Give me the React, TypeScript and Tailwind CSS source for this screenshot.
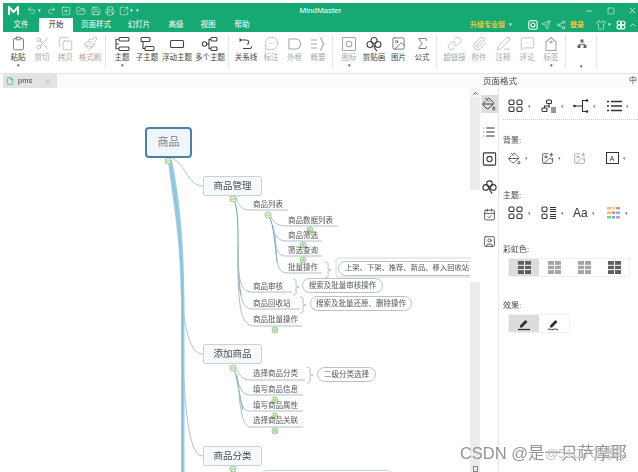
import {
  ChevronUp,
  Copy,
  File,
  FolderOpen,
  Image,
  ImagePlus,
  Link,
  MessageCircleMore,
  MessageSquareMore,
  Minus,
  Paperclip,
  PenLine,
  Printer,
  Redo2,
  Save,
  Scissors,
  Send,
  Share2,
  Shirt,
  Sigma,
  SquarePlus,
  SquareArrowOutUpRight,
  Square,
  Undo2,
  X,
  Paintbrush,
  Clipboard,
  CalendarCheck,
  SquareUser,
  List,
  PaintBucket,
} from 'lucide-react';
import type { ReactNode } from 'react';

const TopicIcon = ({ kind }: { kind: string }) => (
  <svg width="18" height="16" viewBox="0 0 18 16" fill="none" stroke="currentColor" strokeWidth="1.1">
    {kind === 'main' && (
      <>
        <rect x="6" y="1.500" width="10" height="3.500" rx="1" />
        <rect x="6" y="11" width="10" height="3.500" rx="1" />
        <path d="M6 3.200H3v9.500h3M3 8h3" />
      </>
    )}
    {kind === 'sub' && (
      <>
        <rect x="3" y="1.500" width="9" height="4" rx="1" />
        <rect x="7" y="10.500" width="9" height="4" rx="1" />
        <path d="M5 5.500v7h2" />
      </>
    )}
    {kind === 'float' && <rect x="2.500" y="4.500" width="13" height="7" rx="1" />}
    {kind === 'multi' && (
      <>
        <circle cx="3.500" cy="8" r="2.200" />
        <rect x="10" y="1.500" width="6" height="3.500" rx="1" />
        <rect x="10" y="11" width="6" height="3.500" rx="1" />
        <path d="M5.500 8H8V3.200h2M8 8v4.800h2" />
      </>
    )}
    {kind === 'relation' && <path d="M3 4h6c3 0 4 3 1 4.500M6 12.500h7c1.500 0 2-1 1-2M2.500 2.500 4 4 2.500 5.500" />}
    {kind === 'outline' && <path d="M3 3h7c6 0 6 10 0 10H3z" />}
    {kind === 'summary' && <path d="M2 4h6M2 8h6M2 12h6M11 2c3 0 1 5 4 6-3 1-1 6-4 6" />}
    {kind === 'mark' && (
      <>
        <rect x="2.500" y="1.500" width="13" height="13" rx="1" />
        <circle cx="9" cy="8" r="2.800" />
      </>
    )}
    {kind === 'clover' && (
      <>
        <circle cx="9" cy="4.500" r="3" />
        <circle cx="5" cy="8.500" r="3" />
        <circle cx="13" cy="8.500" r="3" />
        <path d="M9 8.500c0 3 1 5 3 6.500" />
      </>
    )}
    {kind === 'tag' && (
      <>
        <path d="M4 6l5-4.500L14 6v8.500H4z" />
        <circle cx="9" cy="6" r="1" />
      </>
    )}
  </svg>
);

const GridIcon = ({ lines = false }: { lines?: boolean }) => (
  <svg width="16" height="14" viewBox="0 0 16 14" fill="none" stroke="#333" strokeWidth="1.1">
    <rect x="1" y="1" width="5" height="4.500" rx="1.300" />
    <rect x="1" y="8" width="5" height="4.500" rx="1.300" />
    {lines ? (
      <path d="M9 1.500h6M9 3.500h6M9 5.500h6M9 8.500h6M9 10.500h6M9 12.500h6" />
    ) : (
      <>
        <rect x="9" y="1" width="5" height="4.500" rx="1.300" />
        <rect x="9" y="8" width="5" height="4.500" rx="1.300" />
      </>
    )}
  </svg>
);

const OrgIcon = () => (
  <svg width="16" height="14" viewBox="0 0 16 14" fill="none" stroke="#333" strokeWidth="1.100">
    <rect x="5.500" y="1" width="5" height="3.500" rx="1" />
    <rect x="1" y="9" width="5" height="3.500" rx="1" />
    <path d="M8 4.500v2.500H3.500v2M8 7v2M10 9h5M10 11h5M10 13h5" />
  </svg>
);

const BranchIcon = () => (
  <svg width="16" height="14" viewBox="0 0 16 14" fill="none" stroke="#333" strokeWidth="1.100">
    <path d="M13 1.500H9.500v11H13M1 7h8.500" />
    <circle cx="1.500" cy="7" r="0.800" fill="#333" />
    <circle cx="14" cy="1.500" r="0.800" fill="#333" />
    <circle cx="14" cy="12.500" r="0.800" fill="#333" />
  </svg>
);

const ListLinesIcon = () => (
  <svg width="16" height="14" viewBox="0 0 16 14" stroke="#333" strokeWidth="1.300">
    <path d="M5 2.500h11M5 7h11M5 11.500h11" />
    <path d="M1 2.500h2M1 7h2M1 11.500h2" />
  </svg>
);

const ColorIcon = () => (
  <svg width="15" height="14" viewBox="0 0 15 14">
    <rect x="1" y="1" width="4" height="2.500" fill="#f7a8c9" />
    <rect x="6" y="1" width="3" height="2.500" fill="#f4d35e" />
    <rect x="10" y="1" width="4" height="2.500" fill="#c58be6" />
    <rect x="1" y="5.500" width="4" height="2.500" fill="#f6c04d" />
    <rect x="6" y="5.500" width="3" height="2.500" fill="#ee7b7b" />
    <rect x="10" y="5.500" width="4" height="2.500" fill="#6cc6e8" />
    <rect x="1" y="10" width="4" height="2.500" fill="#7fd08a" />
    <rect x="6" y="10" width="3" height="2.500" fill="#59b7e4" />
    <rect x="10" y="10" width="4" height="2.500" fill="#e78ad0" />
  </svg>
);

const RainbowIcon = ({ dark }: { dark: boolean }) => (
  <svg width="13" height="13" viewBox="0 0 13 13">
    <rect width="13" height="13" fill={dark ? '#5f5f5f' : '#a5a5a5'} />
    <path d="M0 4.300h13M0 8.600h13M6.500 0v13" stroke="#fff" strokeWidth="1" />
  </svg>
);

const EffectIcon = ({ rough }: { rough?: boolean }) => (
  <svg width="14" height="14" viewBox="0 0 14 14" fill="none">
    <path d="M3 8.500 8.500 3l2 2L5 10.500H3z" fill="#2e2e2e" />
    {rough ? (
      <path d="M1 12.500c2-1.500 3 1 5 0s3-.5 5 .5" stroke="#2e2e2e" strokeWidth="1" />
    ) : (
      <path d="M1 12.500h12" stroke="#2e2e2e" strokeWidth="1.200" />
    )}
  </svg>
);

type RibbonItem = { label: string; icon: ReactNode; w: string; muted?: boolean; caret?: boolean };

const ic = { size: 15, strokeWidth: 1.1 };

const clipboardGroup: RibbonItem[] = [
  { label: '粘贴', icon: <Clipboard {...ic} />, w: 'w-[24px]', caret: true },
  { label: '剪切', icon: <Scissors {...ic} />, w: 'w-[24px]', muted: true },
  { label: '拷贝', icon: <Copy {...ic} />, w: 'w-[23px]', muted: true },
  { label: '格式刷', icon: <Paintbrush {...ic} />, w: 'w-[26px]', muted: true },
];
const topicGroup: RibbonItem[] = [
  { label: '主题', icon: <TopicIcon kind="main" />, w: 'w-[24px]', caret: true },
  { label: '子主题', icon: <TopicIcon kind="sub" />, w: 'w-[26px]' },
  { label: '浮动主题', icon: <TopicIcon kind="float" />, w: 'w-[34px]' },
  { label: '多个主题', icon: <TopicIcon kind="multi" />, w: 'w-[32px]' },
];
const relationGroup: RibbonItem[] = [
  { label: '关系线', icon: <TopicIcon kind="relation" />, w: 'w-[26px]' },
  { label: '标注', icon: <MessageCircleMore {...ic} />, w: 'w-[24px]', muted: true },
  { label: '外框', icon: <TopicIcon kind="outline" />, w: 'w-[23px]', muted: true },
  { label: '概要', icon: <TopicIcon kind="summary" />, w: 'w-[24px]', muted: true },
];
const insertGroup: RibbonItem[] = [
  { label: '图标', icon: <TopicIcon kind="mark" />, w: 'w-[24px]', muted: true, caret: true },
  { label: '剪贴画', icon: <TopicIcon kind="clover" />, w: 'w-[26px]' },
  { label: '图片', icon: <Image {...ic} />, w: 'w-[23px]' },
  { label: '公式', icon: <Sigma {...ic} />, w: 'w-[24px]' },
];
const linkGroup: RibbonItem[] = [
  { label: '超链接', icon: <Link {...ic} />, w: 'w-[25px]', muted: true },
  { label: '附件', icon: <Paperclip {...ic} />, w: 'w-[24px]', muted: true },
  { label: '注释', icon: <PenLine {...ic} />, w: 'w-[24px]', muted: true },
  { label: '评论', icon: <MessageSquareMore {...ic} />, w: 'w-[24px]', muted: true },
  { label: '标签', icon: <TopicIcon kind="tag" />, w: 'w-[24px]', muted: true, caret: true },
];

const RibbonGroup = ({ items, className }: { items: RibbonItem[]; className: string }) => (
  <div className={`flex h-[35px] border-r border-[#e6e6e6] ${className}`}>
    {items.map((item) => (
      <div
        key={item.label}
        className={`flex shrink-0 flex-col items-center ${item.w} ${item.muted ? 'text-[#a8a8a8]' : 'text-[#444]'}`}
      >
        <div className="flex h-[19px] items-center">{item.icon}</div>
        <span className="whitespace-nowrap text-[7.5px] leading-[9px]">{item.label}</span>
        {item.caret && <span className="text-[5px] leading-[6px] text-[#444]">▾</span>}
      </div>
    ))}
  </div>
);

const tabs = [
  { label: '文件', className: 'w-[36px] text-white' },
  { label: '开始', className: 'w-[34px] bg-white text-[#333]' },
  { label: '页面样式', className: 'w-[46px] text-white' },
  { label: '幻灯片', className: 'w-[40px] text-white' },
  { label: '高级', className: 'w-[34px] text-white' },
  { label: '视图', className: 'w-[30px] text-white' },
  { label: '帮助', className: 'w-[38px] text-white' },
];

const TitleBar = () => (
  <div className="ml-[3px] flex h-[29px] flex-col bg-[#17a974] text-white">
    <div className="grid h-[15px] grid-cols-[1fr_auto_1fr] items-center">
      <div className="flex items-center">
        <svg className="ml-[5px] mr-[8px]" width="11" height="10" viewBox="0 0 11 10" fill="none" stroke="#fff" strokeWidth="2">
          <path d="M1 9V1l4.500 5L10 1v8" />
        </svg>
        <Undo2 size={9} strokeWidth={1.3} />
        <span className="ml-[2px] mr-[6px] text-[5px]">▾</span>
        <Redo2 size={9} strokeWidth={1.3} className="mr-[5px]" />
        <SquarePlus size={10} strokeWidth={1.2} className="mr-[5px]" />
        <FolderOpen size={10} strokeWidth={1.2} className="mr-[5px]" />
        <Save size={10} strokeWidth={1.2} className="mr-[4px]" />
        <Printer size={10} strokeWidth={1.2} className="mr-[4px]" />
        <SquareArrowOutUpRight size={10} strokeWidth={1.2} />
        <span className="ml-[1px] text-[5px]">▾</span>
        <span className="ml-[3px] text-[5px]">▾</span>
      </div>
      <span className="text-[8px] leading-none">MindMaster</span>
      <div className="flex items-center justify-end">
        <Minus size={8} strokeWidth={2} className="mr-[14px]" />
        <Square size={8} strokeWidth={1.5} className="mr-[13px]" />
        <X size={9} strokeWidth={2} className="mr-[1px]" />
      </div>
    </div>
    <div className="flex h-[14px] items-stretch">
      {tabs.map((tab) => (
        <div key={tab.label} className={`flex items-center justify-center text-[7.5px] ${tab.className}`}>
          {tab.label}
        </div>
      ))}
      <div className="flex flex-1 items-center justify-end">
        <span className="text-[7px] font-bold text-[#f0c53c]">升级专业版</span>
        <span className="ml-[4px] mr-[16px] text-[5px]">▾</span>
        <TitleGlyph />
        <Send size={10} strokeWidth={1.3} className="mr-[5px]" />
        <Share2 size={10} strokeWidth={1.3} className="mr-[4px]" />
        <span className="mr-[12px] text-[7px] font-bold text-[#f0c53c]">登录</span>
        <Shirt size={10} strokeWidth={1.3} />
        <span className="ml-[2px] mr-[5px] text-[5px]">▾</span>
        <span className="mr-[2px] flex">
          <TopicCloverSmall />
        </span>
        <ChevronUp size={10} strokeWidth={1.6} />
      </div>
    </div>
  </div>
);

const TitleGlyph = () => (
  <svg className="mr-[3px]" width="10" height="10" viewBox="0 0 10 10" fill="none" stroke="#fff" strokeWidth="1.100">
    <rect x="0.800" y="0.800" width="8.400" height="8.400" rx="1.500" />
    <circle cx="5" cy="5" r="2" />
  </svg>
);

const TopicCloverSmall = () => (
  <svg width="10" height="10" viewBox="0 0 10 10" fill="none" stroke="#fff" strokeWidth="1.100">
    <circle cx="3" cy="3" r="2" />
    <circle cx="7" cy="3" r="2" />
    <circle cx="3" cy="7" r="2" />
    <circle cx="7" cy="7" r="2" />
  </svg>
);

const Ribbon = () => (
  <div className="flex h-[41px] items-start bg-white pl-[6px] pt-[2px]">
    <RibbonGroup items={clipboardGroup} className="mr-[4px] pr-[2px]" />
    <RibbonGroup items={topicGroup} className="mr-[4px] pr-[2px]" />
    <RibbonGroup items={relationGroup} className="mr-[4px] pr-[2px]" />
    <RibbonGroup items={insertGroup} className="mr-[5px] pr-[2px]" />
    <RibbonGroup items={linkGroup} className="mr-[6px] pr-[2px]" />
    <div className="flex h-[35px] w-[25px] flex-col items-center border-r border-[#e6e6e6] pr-[5px] text-[#666]">
      <svg className="mt-[5px]" width="10" height="10" viewBox="0 0 10 10" fill="#666">
        <rect x="3.500" y="0.500" width="3" height="3" />
        <rect x="0.500" y="6" width="3" height="3" />
        <rect x="6.500" y="6" width="3" height="3" />
        <path d="M5 3.500v1.500H2v1h1V5.800h4V7h1V5H5.500V3.500z" />
      </svg>
      <span className="mt-[14px] text-[5px] leading-[6px] text-[#444]">▾</span>
    </div>
  </div>
);

const TabStrip = () => (
  <div className="flex h-[15px] border-t border-[#e4e4e4] bg-[#fbfbfb]">
    <div className="w-[470px] pl-[3px]">
      <div className="flex h-full w-[54px] items-center bg-[#e3e3e3] pl-[3px] text-[#444]">
        <File size={8} strokeWidth={1.8} className="text-[#17a974]" />
        <span className="ml-[4px] text-[7.5px]">pms</span>
        <X size={7} strokeWidth={1.5} className="ml-[12px] text-[#888]" />
      </div>
    </div>
    <div className="flex flex-1 items-center justify-between pl-[13px] pr-[1px] text-[#444]">
      <span className="text-[8.5px]">页面格式</span>
      <span className="text-[8px]">中</span>
    </div>
  </div>
);

const topics = [
  { label: '商品管理', className: 'left-[203px] top-[88px]' },
  { label: '添加商品', className: 'left-[203px] top-[256px]' },
  { label: '商品分类', className: 'left-[203px] top-[358px]' },
];

const subTopics = [
  { label: '商品列表', className: 'left-[253px] top-[111px]' },
  { label: '商品数据列表', className: 'left-[288px] top-[127px]' },
  { label: '商品筛选', className: 'left-[288px] top-[142px]' },
  { label: '筛选查询', className: 'left-[288px] top-[157px]' },
  { label: '批量操作', className: 'left-[288px] top-[174px]' },
  { label: '商品审核', className: 'left-[253px] top-[193px]' },
  { label: '商品回收站', className: 'left-[253px] top-[210px]' },
  { label: '商品批量操作', className: 'left-[253px] top-[226px]' },
  { label: '选择商品分类', className: 'left-[253px] top-[280px]' },
  { label: '填写商品信息', className: 'left-[253px] top-[296px]' },
  { label: '填写商品属性', className: 'left-[253px] top-[312px]' },
  { label: '选择商品关联', className: 'left-[253px] top-[327px]' },
];

const pills = [
  { label: '上架、下架、推荐、新品、移入回收站', className: 'left-[338px] top-[173px] h-[15px] w-[140px] pl-[6px] text-[7.3px]' },
  { label: '搜索及批量审核操作', className: 'left-[302px] top-[190px] h-[15px] w-[81px] justify-center text-[7.5px]' },
  { label: '搜索及批量还原、删除操作', className: 'left-[310px] top-[208px] h-[15px] w-[102px] justify-center text-[7.5px]' },
  { label: '二级分类选择', className: 'left-[317px] top-[279px] h-[15px] w-[59px] justify-center text-[7.5px]' },
];

const Toggle = ({ x, y, open }: { x: number; y: number; open?: boolean }) => (
  <g fill="#eef7ea" stroke="#8cc67d" strokeWidth="0.9">
    <circle cx={x} cy={y} r="3" />
    <path d={open ? `M${x - 2} ${y}h4` : `M${x - 2} ${y}h4M${x} ${y - 2}v4`} fill="none" />
  </g>
);

const Connectors = () => (
  <svg className="absolute inset-0" width="470" height="384" viewBox="0 88 470 384" fill="none">
    <path d="M168 160C172 200 180 230 181 300L181 472L184.500 472L184.500 300C184 230 178 190 172 160Z" fill="#9ccbe4" stroke="none" />
    <path d="M170 160C176 200 182 240 182.500 300V472" stroke="#7fb3d1" strokeWidth="0.600" />
    <g stroke="#a7bcc8" strokeWidth="0.900">
      <path d="M172 158C186 165 188 186 203 186" />
      <path d="M181 285C184 330 190 354 203 354" />
      <path d="M183 365C186 420 190 456 203 456" />
    </g>
    <path d="M234 199C238 210 238 225 238 245C238 270 239 285 241 295" stroke="#6a9fc2" strokeWidth="1" />
    <path d="M269 216C274 225 275 245 277 262" stroke="#6a9fc2" strokeWidth="1" />
    <path d="M234 369C238 380 239 395 243 410" stroke="#6a9fc2" strokeWidth="1" />
    <g stroke="#a3b8c4" strokeWidth="0.900">
      <path d="M236 198C240 205 240 210 250 210H288" />
      <path d="M238 245C238 280 240 292 252 292H292" />
      <path d="M238 255C238 295 242 309 252 309H300" />
      <path d="M238 265C238 310 242 326 254 326H302" />
      <path d="M271 217C275 225 280 226 288 226H338" />
      <path d="M273 225C274 235 278 241 286 241H322" />
      <path d="M275 235C276 250 278 256 286 256H322" />
      <path d="M276 250C277 265 279 273 287 273H322" />
      <path d="M236 369C240 375 242 380 250 380H305" />
      <path d="M237 375C239 388 242 395 250 395H303" />
      <path d="M238 385C240 402 243 411 250 411H303" />
      <path d="M239 395C241 415 244 427 250 427H303" />
      <path d="M325 262C329 262 328 265 328 268C328 270 329 270 331 270C329 270 328 270 328 272C328 275 329 278 325 278" />
      <path d="M293 279C297 279 296 282 296 285C296 287 297 287 299 287C297 287 296 287 296 289C296 292 297 295 293 295" />
      <path d="M300 297C304 297 303 300 303 303C303 305 304 305 306 305C304 305 303 305 303 307C303 310 304 313 300 313" />
      <path d="M307 367C311 367 310 370 310 373C310 375 311 375 313 375C311 375 310 375 310 377C310 380 311 383 307 383" />
    </g>
    <path d="M470 258H338C336 258 336 260 336 262V273C336 276 336 277 338 277H470" stroke="#c6d6e0" strokeWidth="0.900" />
    <Toggle x={168} y={161} open />
    <Toggle x={233} y={199} open />
    <Toggle x={268} y={215} open />
    <Toggle x={310} y={230} />
    <Toggle x={303} y={245} />
    <Toggle x={303} y={260} />
    <Toggle x={275} y={330} />
    <Toggle x={233} y={368} open />
    <Toggle x={275} y={400} />
    <Toggle x={275} y={416} />
    <Toggle x={275} y={431} />
    <Toggle x={233} y={469} open />
  </svg>
);

const MapCanvas = () => (
  <div className="relative w-[470px] shrink-0 overflow-hidden bg-white">
    <Connectors />
    <div className="absolute left-[145px] top-[39px] flex h-[31px] w-[47px] items-center justify-center rounded-[4px] border-2 border-[#4d80a3] bg-[#eef5fb] text-[11px] text-[#7b858d]">
      商品
    </div>
    {topics.map((topic) => (
      <div
        key={topic.label}
        className={`absolute flex h-[20px] w-[59px] items-center justify-center rounded-[2px] border border-[#c6d3dc] bg-[#f6fafd] text-[9.5px] text-[#4a4a4a] ${topic.className}`}
      >
        {topic.label}
      </div>
    ))}
    {subTopics.map((topic) => (
      <span key={topic.label} className={`absolute whitespace-nowrap text-[7.5px] leading-[12px] text-[#555] ${topic.className}`}>
        {topic.label}
      </span>
    ))}
    {pills.map((pill) => (
      <div
        key={pill.label}
        className={`absolute flex items-center whitespace-nowrap rounded-full border border-[#b7c2c9] bg-white text-[#555] ${pill.className}`}
      >
        {pill.label}
      </div>
    ))}
    <div className="absolute left-[263px] top-[382px] h-[20px] w-[128px] rounded-[3px] border border-[#c6d3dc] bg-white" />
  </div>
);

const SideScroll = () => (
  <div className="flex w-[10px] shrink-0 flex-col bg-[#ececec]">
    <div className="flex h-[10px] items-center justify-center bg-[#f4f4f4] text-[#444]">
      <ChevronUp size={7} strokeWidth={3} />
    </div>
    <div className="h-[92px]" />
    <div className="h-[92px] bg-white" />
    <div className="flex-1" />
    <div className="flex h-[6px] justify-center">
      <div className="h-[6px] w-[5px] border border-[#888]" />
    </div>
  </div>
);

const sideIcons = [
  { id: 'page', icon: <PaintBucket size={14} strokeWidth={1.5} />, active: true },
  { id: 'list', icon: <List size={14} strokeWidth={1.8} /> },
  { id: 'mark', icon: <TopicIcon kind="mark" /> },
  { id: 'clip', icon: <TopicIcon kind="clover" /> },
  { id: 'task', icon: <CalendarCheck size={13} strokeWidth={1.4} /> },
  { id: 'user', icon: <SquareUser size={13} strokeWidth={1.4} /> },
];

const SideTabs = () => (
  <div className="flex w-[19px] shrink-0 flex-col items-center border-r border-[#e6e6e6] bg-white pt-[7px] text-[#333]">
    {sideIcons.map((item) => (
      <div
        key={item.id}
        className={`mb-[9.500px] flex h-[18px] w-[17px] items-center justify-center ${item.active ? 'bg-[#dcdcdc]' : ''}`}
      >
        {item.icon}
      </div>
    ))}
  </div>
);

const ToolCell = ({ children, muted }: { children: ReactNode; muted?: boolean }) => (
  <div className={`flex w-[34px] items-center ${muted ? 'opacity-50' : ''}`}>
    {children}
    {!muted && <span className="ml-[4px] text-[5px] text-[#777]">▾</span>}
  </div>
);

const ToolRow = ({ className, children }: { className: string; children: ReactNode }) => (
  <div className={`flex h-[16px] pl-[5px] text-[#333] ${className}`}>{children}</div>
);

const FormatPanel = () => (
  <div className="min-w-0 flex-1 overflow-hidden bg-white pl-[4px] pt-[10px] text-[8px] leading-[10px] text-[#444]">
    <ToolRow className="">
      <ToolCell><GridIcon /></ToolCell>
      <ToolCell><OrgIcon /></ToolCell>
      <ToolCell><BranchIcon /></ToolCell>
      <ToolCell><ListLinesIcon /></ToolCell>
    </ToolRow>
    <div className="mt-[5px] border-t border-dotted border-[#c9c9c9]" />
    <p className="mt-[16px]">背景:</p>
    <ToolRow className="mt-[4px]">
      <ToolCell><PaintBucket size={13} strokeWidth={1.4} /></ToolCell>
      <ToolCell><ImagePlus size={13} strokeWidth={1.4} /></ToolCell>
      <ToolCell muted><ImagePlus size={13} strokeWidth={1.4} /></ToolCell>
      <ToolCell>
        <span className="flex h-[12px] w-[13px] items-center justify-center border border-[#333] text-[7px] leading-none">A</span>
      </ToolCell>
    </ToolRow>
    <p className="mt-[25px]">主题:</p>
    <ToolRow className="mt-[4px]">
      <ToolCell><GridIcon /></ToolCell>
      <ToolCell><GridIcon lines /></ToolCell>
      <ToolCell><span className="text-[12px] leading-[14px] text-[#333]">Aa</span></ToolCell>
      <ToolCell><ColorIcon /></ToolCell>
    </ToolRow>
    <p className="mt-[24px]">彩虹色:</p>
    <div className="ml-[5px] mt-[3px] flex h-[19px] w-[122px] border border-[#f1f1f1]">
      {[0, 1, 2, 3].map((n) => (
        <div key={n} className={`flex w-[30px] items-center justify-center ${n === 0 ? 'bg-[#dcdcdc]' : ''}`}>
          <RainbowIcon dark={n === 0 || n === 3} />
        </div>
      ))}
    </div>
    <p className="mt-[24px]">效果:</p>
    <div className="ml-[5px] mt-[3px] flex h-[19px] w-[62px] border border-[#f1f1f1]">
      <div className="flex w-[30px] items-center justify-center bg-[#dcdcdc]">
        <EffectIcon />
      </div>
      <div className="flex w-[31px] items-center justify-center">
        <EffectIcon rough />
      </div>
    </div>
  </div>
);

const App = () => (
  <div className="relative flex h-[472px] w-[638px] flex-col overflow-hidden bg-white font-['Liberation_Sans','Noto_Sans_CJK_SC',sans-serif]">
    <div className="flex h-full flex-col blur-[0.5px]">
      <div className="h-[3px] shrink-0" />
      <TitleBar />
      <Ribbon />
      <TabStrip />
      <div className="flex min-h-0 flex-1">
        <MapCanvas />
        <SideScroll />
        <SideTabs />
        <FormatPanel />
      </div>
    </div>
    {/* watermark sits on top of the screenshot */}
    <div className="absolute bottom-[11px] right-[11px] whitespace-nowrap text-[16.5px] leading-none text-[#949494]">
      CSDN @是一只萨摩耶
    </div>
    <div className="absolute bottom-[12px] right-[12px] whitespace-nowrap text-[13px] leading-none text-[#c4c4c4]">
      @51CTO博客
    </div>
  </div>
);

export default App;
